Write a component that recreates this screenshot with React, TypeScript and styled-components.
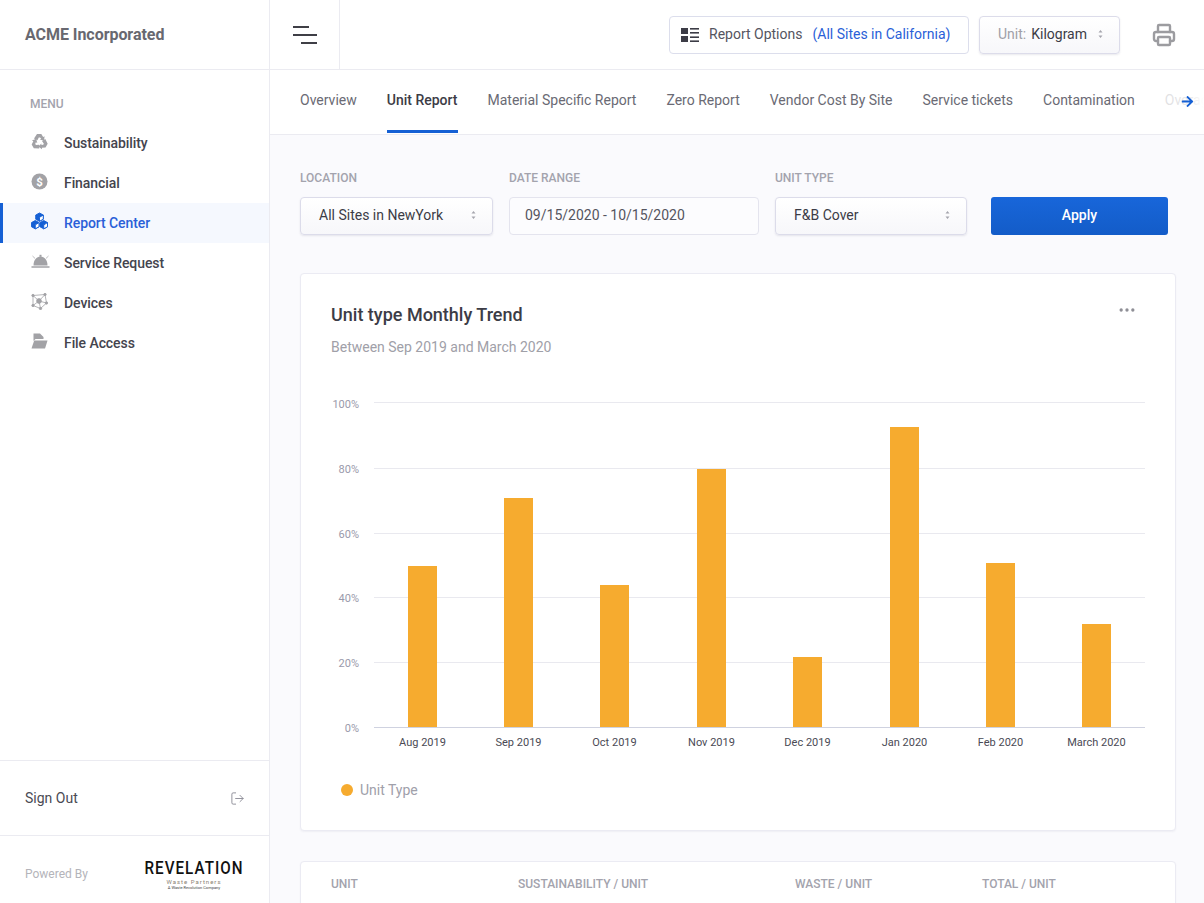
import React from "react";
import styled, { createGlobalStyle } from "styled-components";
import { FaArrowRight } from "react-icons/fa";
import { Printer, LogOut, Ellipsis } from "lucide-react";

const GlobalStyle = createGlobalStyle`
  html, body {
    margin: 0;
    padding: 0;
    height: 100%;
    overflow: hidden;
    background: #fff;
    font-family: Roboto, "Liberation Sans", sans-serif;
    color: #3c3c46;
  }
  * { box-sizing: border-box; }
`;

const Page = styled.div`
  display: grid;
  grid-template-columns: 270px 1fr;
  grid-template-rows: 903px;
  height: 903px;
  overflow: hidden;
`;

const Sidebar = styled.aside`
  display: flex;
  flex-direction: column;
  min-height: 0;
  border-right: 1px solid #ebebf1;
  background: #fff;
`;

const Brand = styled.div`
  height: 70px;
  flex: none;
  display: flex;
  align-items: center;
  padding-left: 25px;
  border-bottom: 1px solid #ebebf1;
  font-size: 16px;
  font-weight: 700;
  letter-spacing: -0.05px;
  color: #686870;
`;

const MenuTitle = styled.div`
  padding: 27px 0 0 30px;
  height: 53px;
  flex: none;
  font-size: 12px;
  line-height: 14px;
  font-weight: 500;
  color: #a3a3ad;
`;

const Nav = styled.nav`
  flex: 1;
  display: flex;
  flex-direction: column;
`;

const NavItem = styled.a<{ $active?: boolean }>`
  height: 40px;
  display: flex;
  align-items: center;
  padding-left: ${(p) => (p.$active ? "28px" : "31px")};
  border-left: ${(p) => (p.$active ? "3px solid #1560d4" : "none")};
  background: ${(p) => (p.$active ? "#f5f8fe" : "transparent")};
  color: ${(p) => (p.$active ? "#2a5fd8" : "#44444e")};
  font-size: 14px;
  font-weight: 500;
  letter-spacing: -0.08px;
`;

const NavIcon = styled.span<{ $active?: boolean }>`
  width: 33px;
  height: 18px;
  margin-top: -4px;
  display: flex;
  align-items: center;
  color: ${(p) => (p.$active ? "#1560d4" : "#a2a2a6")};
`;

const SignOut = styled.div`
  height: 76px;
  flex: none;
  display: flex;
  align-items: center;
  justify-content: space-between;
  padding: 0 24px 0 25px;
  border-top: 1px solid #ebebf1;
  border-bottom: 1px solid #ebebf1;
  font-size: 14px;
  color: #4a4a54;
  svg {
    color: #8d8d98;
  }
`;

const PoweredRow = styled.div`
  height: 67px;
  flex: none;
  display: flex;
  align-items: center;
  justify-content: space-between;
  padding: 10px 25px 0;
`;

const PoweredText = styled.span`
  font-size: 12px;
  margin-top: -2px;
  color: #b4b4ba;
`;

const Logo = styled.div`
  width: 100px;
  display: flex;
  flex-direction: column;
  align-items: center;
  color: #111;
`;

const LogoName = styled.div`
  font-size: 19px;
  line-height: 17px;
  font-weight: 500;
  white-space: nowrap;
  letter-spacing: 1.3px;
  transform: scaleX(0.8);
  margin-bottom: 2px;
`;

const LogoSub = styled.div`
  font-size: 6px;
  line-height: 7px;
  letter-spacing: 1px;
  color: #8a8272;
`;

const LogoTiny = styled.div`
  font-size: 4px;
  line-height: 5px;
  color: #444;
`;

const Main = styled.main`
  display: flex;
  flex-direction: column;
  min-width: 0;
  min-height: 0;
  overflow: hidden;
  background: #fafafd;
`;

const Header = styled.header`
  height: 70px;
  flex: none;
  display: flex;
  align-items: center;
  background: #fff;
  border-bottom: 1px solid #ebebf1;
`;

const Burger = styled.button`
  width: 70px;
  height: 69px;
  flex: none;
  border: none;
  border-right: 1px solid #ebebf1;
  background: none;
  padding: 0 0 0 23px;
  display: flex;
  flex-direction: column;
  justify-content: center;
  gap: 6px;
`;

const BurgerLine = styled.span<{ $width: number; $offset: number }>`
  display: block;
  height: 2px;
  background: #3f3f46;
  width: ${(p) => p.$width}px;
  margin-left: ${(p) => p.$offset}px;
`;

const HeaderActions = styled.div`
  flex: 1;
  display: flex;
  justify-content: flex-end;
  align-items: center;
  padding-right: 20px;
`;

const OptionsButton = styled.div`
  width: 300px;
  height: 38px;
  display: flex;
  align-items: center;
  gap: 10px;
  padding: 0 0 2px 11px;
  border: 1px solid #dcdeec;
  border-radius: 4px;
  background: #fff;
  font-size: 14px;
  color: #55555f;
`;

const OptionsSite = styled.span`
  color: #2a5fd8;
`;

const OptionsIcon = styled.svg`
  flex: none;
  margin-top: 2px;
  color: #3c3c46;
`;

const SelectBox = styled.div<{ $width: number }>`
  width: ${(p) => p.$width}px;
  height: 38px;
  flex: none;
  display: flex;
  align-items: center;
  justify-content: space-between;
  padding: 0 16px 2px 18px;
  border: 1px solid #dcdcea;
  border-radius: 4px;
  background: linear-gradient(#ffffff, #f7f7fa);
  box-shadow: 0 1px 2px rgba(70, 70, 110, 0.12);
  font-size: 14px;
  color: #3c3c46;
`;

const UnitSelect = styled(SelectBox)`
  margin: 0 23px 0 10px;
`;

const UnitLabel = styled.span`
  color: #a0a0a8;
  margin-right: 5px;
`;

const PrintButton = styled.div`
  width: 41px;
  display: flex;
  justify-content: center;
  color: #9c9ca0;
`;

const SortArrows = styled.svg`
  flex: none;
  color: #a5a5ad;
`;

const Tabs = styled.div`
  position: relative;
  height: 65px;
  flex: none;
  display: flex;
  gap: 30px;
  padding-left: 30px;
  overflow: hidden;
  background: #fff;
  border-bottom: 1px solid #ebebf1;
`;

const Tab = styled.a<{ $active?: boolean }>`
  flex: none;
  height: 63px;
  padding-top: 22px;
  font-size: 14px;
  line-height: 17px;
  font-weight: ${(p) => (p.$active ? 500 : 400)};
  color: ${(p) => (p.$active ? "#3c3c46" : "#6a6a74")};
  border-bottom: ${(p) => (p.$active ? "3px solid #1560d4" : "3px solid transparent")};
`;

const TabFade = styled.div`
  position: absolute;
  top: 0;
  right: 0;
  bottom: 0;
  width: 44px;
  display: flex;
  align-items: center;
  padding: 0 0 2px 21px;
  background: linear-gradient(to right, rgba(255, 255, 255, 0.78), rgba(255, 255, 255, 0.85) 70%, #fff);
  color: #1560d4;
  font-size: 13px;
`;

const Content = styled.div`
  flex: 1;
  padding: 35px 28px 0 30px;
  min-height: 0;
`;

const Filters = styled.div`
  display: flex;
  align-items: flex-end;
  margin-bottom: 38px;
`;

const Field = styled.div<{ $gap: number }>`
  margin-right: ${(p) => p.$gap}px;
`;

const FieldLabel = styled.div`
  font-size: 12px;
  line-height: 16px;
  font-weight: 500;
  color: #a3a3ad;
  margin-bottom: 11px;
`;

const DateInput = styled.div`
  width: 250px;
  height: 38px;
  display: flex;
  align-items: center;
  padding: 0 0 2px 15px;
  border: 1px solid #e4e4ee;
  border-radius: 4px;
  background: #fcfcfe;
  font-size: 14px;
  color: #55555f;
`;

const ApplyButton = styled.button`
  width: 177px;
  height: 38px;
  padding: 0 0 2px;
  border: none;
  border-radius: 3px;
  background: linear-gradient(#1866da, #135cc8);
  color: #fff;
  font-family: inherit;
  font-size: 14px;
  font-weight: 500;
`;

const Card = styled.section`
  background: #fff;
  border: 1px solid #ebebf3;
  border-radius: 4px;
  box-shadow: 0 1px 2px rgba(70, 70, 110, 0.06);
`;

const ChartCard = styled(Card)`
  height: 558px;
  margin-bottom: 30px;
`;

const CardHead = styled.div`
  display: flex;
  justify-content: space-between;
  padding: 30px 38px 0 30px;
  height: 110px;
`;

const CardTitle = styled.h2`
  margin: 0;
  font-size: 18px;
  line-height: 22px;
  font-weight: 500;
  color: #3c3c46;
`;

const CardSubtitle = styled.p`
  margin: 12px 0 0;
  font-size: 14px;
  line-height: 18px;
  color: #a0a0a8;
`;

const MoreButton = styled.div`
  color: #8f8f96;
  height: 20px;
  margin-top: -4px;
`;

const ChartSvg = styled.svg`
  display: block;
`;

const Legend = styled.div`
  display: flex;
  align-items: center;
  gap: 7px;
  padding: 22px 0 0 40px;
  font-size: 14px;
  line-height: 18px;
  color: #a0a0aa;
`;

const LegendDot = styled.span`
  width: 12px;
  height: 12px;
  border-radius: 50%;
  background: #f6ab2f;
`;

const TableCard = styled(Card)`
  height: 80px;
  display: grid;
  grid-template-columns: 187px 277px 187px 1fr;
  padding: 14px 0 0 30px;
`;

const TableHeading = styled.div`
  font-size: 12px;
  line-height: 16px;
  font-weight: 500;
  color: #a3a3ad;
`;

const Sort = () => (
  <SortArrows width="5" height="10" viewBox="0 0 5 10">
    <path d="M2.5 1 4.5 3.4H.5zM2.5 9 .5 6.6h4z" fill="currentColor" />
  </SortArrows>
);

const ReportOptionsIcon = () => (
  <OptionsIcon width="18" height="14" viewBox="0 0 18 14" fill="currentColor">
    <rect x="0" y="0" width="7" height="6" />
    <rect x="0" y="8" width="7" height="6" />
    <rect x="9" y="0" width="9" height="1.6" />
    <rect x="9" y="4" width="9" height="1.6" />
    <rect x="9" y="8.4" width="9" height="1.6" />
    <rect x="9" y="12.4" width="9" height="1.6" />
  </OptionsIcon>
);

const RecycleIcon = () => (
  <svg width="17" height="17" viewBox="0 0 17 17" fill="currentColor">
    {[0, 120, 240].map((deg) => (
      <polygon
        key={deg}
        transform={`rotate(${deg} 8.5 9)`}
        points="3,5.5 6,1 10.3,1 12.2,4 13.6,3.2 13,7.8 8.8,6.6 10.2,5.8 9,4.4 7.8,4.4 6.4,7.3"
      />
    ))}
  </svg>
);

const DollarIcon = () => (
  <svg width="17" height="17" viewBox="0 0 17 17">
    <circle cx="8.5" cy="8.5" r="8" fill="currentColor" />
    <text x="8.5" y="12.6" textAnchor="middle" fontSize="11.5" fontWeight="700" fontFamily="Roboto, sans-serif" fill="#fff">
      $
    </text>
  </svg>
);

const CubesIcon = () => (
  <svg width="17" height="18" viewBox="0 0 18 19" stroke="currentColor" strokeWidth="1" strokeLinejoin="round">
    {[
      [4.5, 9],
      [13.5, 9],
      [9, 1],
    ].map(([x, y]) => (
      <g key={`${x}-${y}`}>
        <path d={`M${x} ${y} ${x + 4} ${y + 2.2}V${y + 6.6}L${x} ${y + 8.8} ${x - 4} ${y + 6.6}V${y + 2.2}z`} fill="currentColor" />
        <path d={`M${x} ${y + 4.6} ${x + 4} ${y + 2.2}V${y + 6.6}L${x} ${y + 8.8}z`} fill="#fff" />
      </g>
    ))}
  </svg>
);

const BellIcon = () => (
  <svg width="19" height="16" viewBox="0 0 19 16" fill="currentColor">
    <path d="M2.5 12.5C2.5 7 5.5 3.5 9.5 3.5s7 3.5 7 9z" />
    <rect x="8.5" y="1.8" width="2" height="2" />
    <rect x="0.5" y="13" width="18" height="2" opacity="0.75" />
    <path d="M1.5 3 4 5.4M17.5 3 15 5.4" stroke="currentColor" strokeWidth="1" opacity="0.7" />
  </svg>
);

const DevicesIcon = () => (
  <svg width="17" height="17" viewBox="0 0 17 17" fill="none" stroke="currentColor" strokeWidth="0.8">
    <path d="M2 2.5 14 1.5 15.5 10 9.5 15.5 2 12.5zM2 2.5 8 8 14 1.5M8 8 15.5 10M8 8 9.5 15.5M8 8 2 12.5" />
    <circle cx="8" cy="8" r="2.4" fill="currentColor" />
    <circle cx="2" cy="2.5" r="1.2" fill="currentColor" />
    <circle cx="14" cy="1.5" r="1.2" fill="currentColor" />
    <circle cx="15.5" cy="10" r="1.2" fill="currentColor" />
    <circle cx="9.5" cy="15.5" r="1.2" fill="currentColor" />
    <circle cx="2" cy="12.5" r="1.2" fill="currentColor" />
  </svg>
);

const FilesIcon = () => (
  <svg width="17" height="16" viewBox="0 0 17 16" fill="currentColor">
    <path d="M2.5 8V0.5H9L12.5 4V6H4.5z" />
    <path d="M0.5 15.5 3.2 7.5H16.5L14 15.5z" />
  </svg>
);

const menu = [
  { label: "Sustainability", icon: <RecycleIcon /> },
  { label: "Financial", icon: <DollarIcon /> },
  { label: "Report Center", icon: <CubesIcon />, active: true },
  { label: "Service Request", icon: <BellIcon /> },
  { label: "Devices", icon: <DevicesIcon /> },
  { label: "File Access", icon: <FilesIcon /> },
];

const tabs = [
  "Overview",
  "Unit Report",
  "Material Specific Report",
  "Zero Report",
  "Vendor Cost By Site",
  "Service tickets",
  "Contamination",
  "Overage",
];

const bars = [
  { label: "Aug 2019", x: 422.5, top: 566 },
  { label: "Sep 2019", x: 518.5, top: 498 },
  { label: "Oct 2019", x: 614.5, top: 585 },
  { label: "Nov 2019", x: 711.5, top: 469 },
  { label: "Dec 2019", x: 807.5, top: 657 },
  { label: "Jan 2020", x: 904.5, top: 427 },
  { label: "Feb 2020", x: 1000.5, top: 563 },
  { label: "March 2020", x: 1096.5, top: 624 },
];

const ticks = [
  { label: "100%", y: 402.5, textY: 408 },
  { label: "80%", y: 468.5, textY: 473 },
  { label: "60%", y: 533.5, textY: 538 },
  { label: "40%", y: 597.5, textY: 602 },
  { label: "20%", y: 662.5, textY: 667 },
];

const Chart = () => (
  <ChartSvg width="874" height="375" viewBox="301 384 874 375" fontFamily="Roboto, sans-serif" fontSize="11">
    {ticks.map((t) => (
      <g key={t.label}>
        <line x1="374" x2="1145" y1={t.y} y2={t.y} stroke="#e9e9ef" />
        <text x="359" y={t.textY} textAnchor="end" fill="#9a9aab">
          {t.label}
        </text>
      </g>
    ))}
    {bars.map((b) => (
      <rect key={b.label} x={b.x - 14.5} y={b.top} width="29" height={727 - b.top} fill="#f6ab2f" />
    ))}
    <line x1="374" x2="1145" y1="727.5" y2="727.5" stroke="#cfd2e0" />
    <text x="359" y="732" textAnchor="end" fill="#9a9aab">
      0%
    </text>
    {bars.map((b) => (
      <text key={b.label} x={b.x} y="746" textAnchor="middle" fill="#4a4a54">
        {b.label}
      </text>
    ))}
  </ChartSvg>
);

export default function App() {
  return (
    <Page>
      <GlobalStyle />
      <Sidebar>
        <Brand>ACME Incorporated</Brand>
        <MenuTitle>MENU</MenuTitle>
        <Nav>
          {menu.map((item) => (
            <NavItem key={item.label} $active={item.active}>
              <NavIcon $active={item.active}>{item.icon}</NavIcon>
              {item.label}
            </NavItem>
          ))}
        </Nav>
        <SignOut>
          Sign Out
          <LogOut size={15} strokeWidth={1.5} />
        </SignOut>
        <PoweredRow>
          <PoweredText>Powered By</PoweredText>
          <Logo>
            <LogoName>REVELATION</LogoName>
            <LogoSub>Waste Partners</LogoSub>
            <LogoTiny>A Waste Revolution Company</LogoTiny>
          </Logo>
        </PoweredRow>
      </Sidebar>
      <Main>
        <Header>
          <Burger aria-label="Toggle menu">
            <BurgerLine $width={16} $offset={0} />
            <BurgerLine $width={24} $offset={0} />
            <BurgerLine $width={16} $offset={8} />
          </Burger>
          <HeaderActions>
            <OptionsButton>
              <ReportOptionsIcon />
              Report Options
              <OptionsSite>(All Sites in California)</OptionsSite>
            </OptionsButton>
            <UnitSelect $width={141}>
              <span>
                <UnitLabel>Unit:</UnitLabel>Kilogram
              </span>
              <Sort />
            </UnitSelect>
            <PrintButton>
              <Printer size={24} strokeWidth={2.4} />
            </PrintButton>
          </HeaderActions>
        </Header>
        <Tabs>
          {tabs.map((tab) => (
            <Tab key={tab} $active={tab === "Unit Report"}>
              {tab}
            </Tab>
          ))}
          <TabFade>
            <FaArrowRight />
          </TabFade>
        </Tabs>
        <Content>
          <Filters>
            <Field $gap={16}>
              <FieldLabel>LOCATION</FieldLabel>
              <SelectBox $width={193}>
                All Sites in NewYork
                <Sort />
              </SelectBox>
            </Field>
            <Field $gap={16}>
              <FieldLabel>DATE RANGE</FieldLabel>
              <DateInput>09/15/2020 - 10/15/2020</DateInput>
            </Field>
            <Field $gap={24}>
              <FieldLabel>UNIT TYPE</FieldLabel>
              <SelectBox $width={192}>
                F&amp;B Cover
                <Sort />
              </SelectBox>
            </Field>
            <ApplyButton>Apply</ApplyButton>
          </Filters>
          <ChartCard>
            <CardHead>
              <div>
                <CardTitle>Unit type Monthly Trend</CardTitle>
                <CardSubtitle>Between Sep 2019 and March 2020</CardSubtitle>
              </div>
              <MoreButton>
                <Ellipsis size={20} />
              </MoreButton>
            </CardHead>
            <Chart />
            <Legend>
              <LegendDot />
              Unit Type
            </Legend>
          </ChartCard>
          <TableCard>
            <TableHeading>UNIT</TableHeading>
            <TableHeading>SUSTAINABILITY / UNIT</TableHeading>
            <TableHeading>WASTE / UNIT</TableHeading>
            <TableHeading>TOTAL / UNIT</TableHeading>
          </TableCard>
        </Content>
      </Main>
    </Page>
  );
}
